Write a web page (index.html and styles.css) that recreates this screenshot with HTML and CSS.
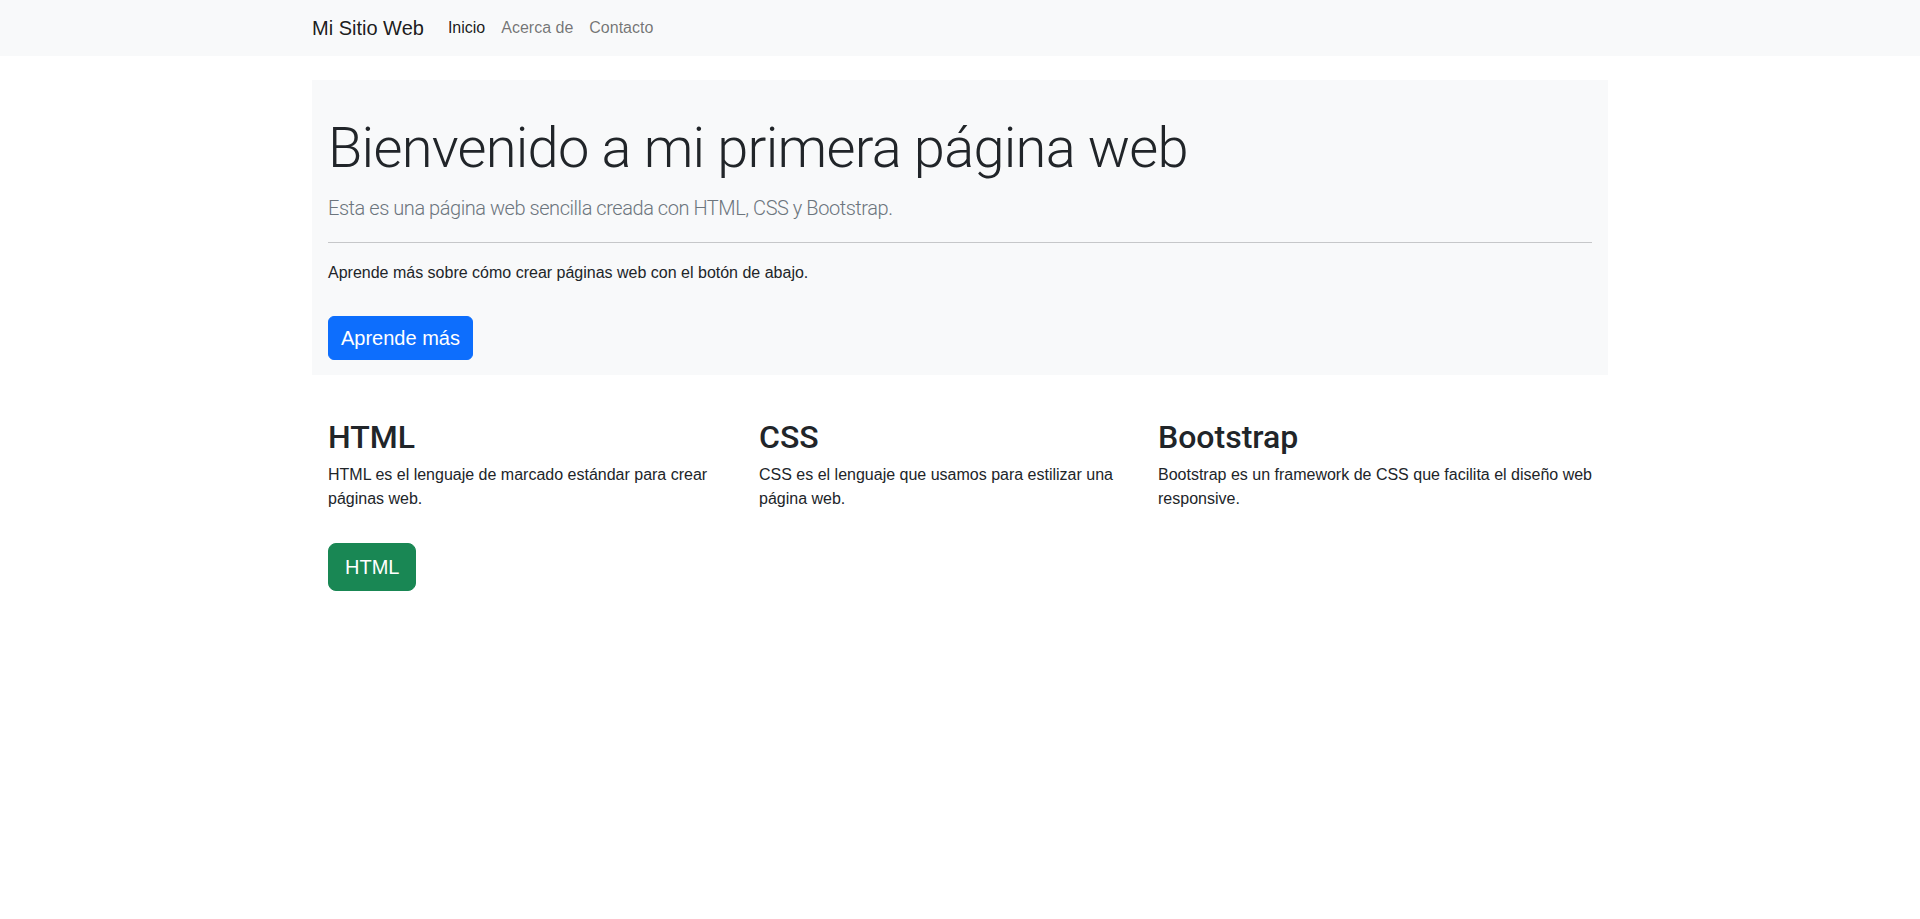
FILE: index.html
```html
<!DOCTYPE html>
<html lang="es">
<head>
<meta charset="utf-8">
<title>Mi Sitio Web</title>
<link rel="stylesheet" href="styles.css">
</head>
<body>
<nav class="navbar">
  <div class="container nav-inner">
    <a class="brand" href="#">Mi Sitio Web</a>
    <ul class="nav-links">
      <li><a class="nav-link active" href="#">Inicio</a></li>
      <li><a class="nav-link" href="#">Acerca de</a></li>
      <li><a class="nav-link" href="#">Contacto</a></li>
    </ul>
  </div>
</nav>
<main class="container">
  <section class="jumbotron">
    <h1 class="display">Bienvenido a mi primera página web</h1>
    <p class="lead">Esta es una página web sencilla creada con HTML, CSS y Bootstrap.</p>
    <hr class="divider">
    <p class="intro">Aprende más sobre cómo crear páginas web con el botón de abajo.</p>
    <a class="btn btn-primary" href="#">Aprende más</a>
  </section>
  <section class="features">
    <div class="feature f1">
      <h2>HTML</h2>
      <p>HTML es el lenguaje de marcado estándar para crear páginas web.</p>
      <a class="btn btn-lg btn-success" href="#">HTML</a>
    </div>
    <div class="feature f2">
      <h2>CSS</h2>
      <p>CSS es el lenguaje que usamos para estilizar una página web.</p>
    </div>
    <div class="feature f3">
      <h2>Bootstrap</h2>
      <p>Bootstrap es un framework de CSS que facilita el diseño web responsive.</p>
    </div>
  </section>
</main>
</body>
</html>
```
FILE: styles.css
```css
* { box-sizing: border-box; }
html, body { margin: 0; padding: 0; }
body {
  font-family: "Liberation Sans", Arial, sans-serif;
  font-size: 16px;
  line-height: 1.5;
  color: #212529;
  background: #fff;
}
a { text-decoration: none; }
.container {
  width: 1296px;
  margin: 0 auto;
}
.navbar {
  background: #f8f9fa;
  padding: 8px 0;
  height: 56px;
}
.nav-inner {
  display: flex;
  align-items: center;
}
.brand {
  font-size: 20px;
  line-height: 30px;
  padding: 5px 0;
  margin-right: 16px;
  color: rgba(0, 0, 0, 0.9);
}
.nav-links {
  list-style: none;
  margin: 0;
  padding: 0;
  display: flex;
}
.nav-link {
  display: block;
  padding: 8px;
  line-height: 24px;
  color: rgba(0, 0, 0, 0.55);
}
.nav-link.active { color: rgba(0, 0, 0, 0.9); }

.jumbotron {
  margin-top: 24px;
  background: #f8f9fa;
  padding: 16px 16px 15px;
}
.display {
  font-family: Roboto, "Liberation Sans", sans-serif;
  font-weight: 300;
  font-size: 56px;
  line-height: 67px;
  letter-spacing: -0.75px;
  margin: 19px 0 0;
}
.lead {
  font-family: Roboto, "Liberation Sans", sans-serif;
  font-weight: 300;
  font-size: 20px;
  line-height: 30px;
  letter-spacing: -0.45px;
  color: #6c757d;
  margin: 11px 0 0;
}
.divider {
  border: 0;
  border-top: 1px solid #c6c7c9;
  margin: 19px 0 0;
  height: 0;
}
.intro {
  margin: 18px 0 0;
}
.btn {
  display: inline-block;
  border: 1px solid transparent;
  color: #fff;
  font-size: 20px;
  line-height: 30px;
  padding: 6px 12px;
  border-radius: 6px;
}
.jumbotron .btn { margin-top: 31px; }
.btn-primary { background: #0d6efd; border-color: #0d6efd; }
.btn-lg { padding: 8px 16px; border-radius: 8px; }
.btn-success { background: #198754; border-color: #198754; }

.features {
  display: grid;
  grid-template-columns: 431px 399px 1fr;
  margin-top: 43px;
}
.feature { padding-left: 16px; }
.f1, .f2 { padding-right: 16px; }
.feature h2 {
  font-family: Roboto, "Liberation Sans", sans-serif;
  font-weight: 500;
  font-size: 32px;
  line-height: 38.4px;
  margin: 0 0 7px;
}
.feature p { margin: 0; }
.feature .btn { margin-top: 32px; }
```
